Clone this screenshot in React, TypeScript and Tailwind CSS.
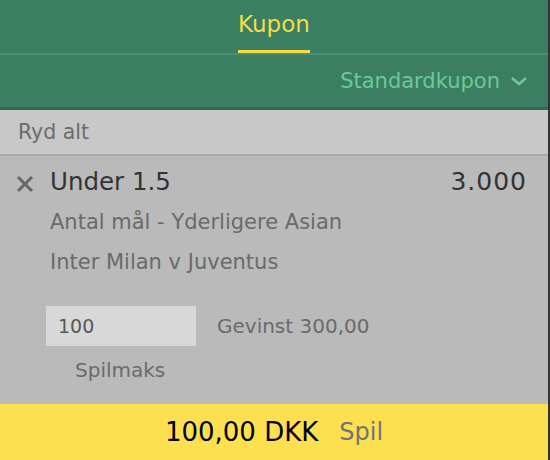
import React from "react";

export default function App() {
  const font = { fontFamily: '"DejaVu Sans", "Open Sans", sans-serif' };
  return (
    <div className="w-[550px] h-[460px] flex overflow-hidden" style={font}>
      <div className="flex-1 flex flex-col">
        {/* header */}
        <div className="bg-[#3b7e61]">
          <div className="h-[53px] flex justify-center items-end">
            <div className="flex flex-col items-center">
              <span className="text-[23px] leading-none text-[#f5dc49] pb-[14px]">Kupon</span>
              <div className="h-[3px] w-[72px] bg-[#f5dc49]" />
            </div>
          </div>
          <div className="h-[2px] bg-[#47936f]" />
          <div className="h-[52px] flex items-center justify-end pr-[20px] text-[#6dc89b]">
            <span className="text-[21px] leading-none">Standardkupon</span>
            <svg width="18" height="12" viewBox="0 0 18 12" className="ml-[10px]">
              <path d="M2 3 L9 9 L16 3" fill="none" stroke="#6dc89b" strokeWidth="2.6" />
            </svg>
          </div>
          <div className="h-[3px] bg-[#2f6b51]" />
        </div>
        {/* Ryd alt */}
        <div className="h-[46px] bg-[#c8c8c8] flex items-center pl-[18px] text-[20.5px] text-[#6c6c6c] border-b-2 border-[#a9a9a9]">
          Ryd alt
        </div>
        {/* bet */}
        <div className="flex-1 bg-[#bababa] flex flex-col">
          <div className="flex items-center h-[28px] mt-[12px] pl-[16px] pr-[21px] text-[#333333]">
            <svg width="18" height="18" viewBox="0 0 18 18" className="mt-[3px]">
              <path d="M2 2 L16 16 M16 2 L2 16" stroke="#666" strokeWidth="3" />
            </svg>
            <span className="ml-[16px] text-[24.5px] leading-[28px]">Under 1.5</span>
            <span className="ml-auto text-[25px] leading-[28px] tracking-[1px]">3.000</span>
          </div>
          <div className="pl-[50px] text-[21px] text-[#6a6a6a] mt-[6px] leading-[40px]">
            <div>Antal mål - Yderligere Asian</div>
            <div>Inter Milan v Juventus</div>
          </div>
          <div className="flex items-center pl-[46px] mt-[24px]">
            <div className="w-[150px] h-[40px] bg-[#d8d8d8] flex items-center pl-[12px] text-[19px] text-[#575757]">
              100
            </div>
            <span className="ml-[21px] text-[20px] text-[#6a6a6a]">Gevinst 300,00</span>
          </div>
          <div className="pl-[75px] mt-[10px] text-[20px] leading-[28px] text-[#6a6a6a]">Spilmaks</div>
        </div>
        {/* footer */}
        <div className="h-[56px] bg-[#fde04f] flex items-center justify-center">
          <span className="text-[26px] text-black">100,00 DKK</span>
          <span className="ml-[21px] text-[24px] text-[#737373]">Spil</span>
        </div>
      </div>
      <div className="w-[2px] bg-[#343434]" />
    </div>
  );
}
